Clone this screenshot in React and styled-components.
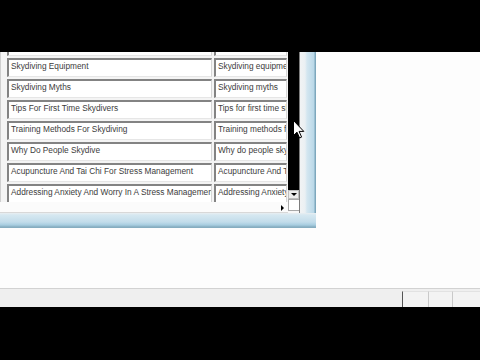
import styled, { createGlobalStyle } from "styled-components";

const GlobalStyle = createGlobalStyle`
  html, body {
    margin: 0;
    padding: 0;
    background: #000;
  }
  body {
    width: 480px;
    height: 360px;
    overflow: hidden;
    font-family: "Liberation Sans", Arial, sans-serif;
  }
`;

// rows of the topic grid, the first one is scrolled mostly out of view
const topics = [
  ["Skydiving Drop Zones", "Skydiving drop zones"],
  ["Skydiving Equipment", "Skydiving equipment"],
  ["Skydiving Myths", "Skydiving myths"],
  ["Tips For First Time Skydivers", "Tips for first time skydivers"],
  ["Training Methods For Skydiving", "Training methods for skydiving"],
  ["Why Do People Skydive", "Why do people skydive"],
  ["Acupuncture And Tai Chi For Stress Management", "Acupuncture And Tai Chi"],
  ["Addressing Anxiety And Worry In A Stress Management", "Addressing Anxiety And Worry"],
];

const Cursor = () => (
  <CursorSvg width="12" height="19" viewBox="0 0 12 19">
    <path
      d="M0.5 0.5 L0.5 15.5 L4 12.2 L6.6 18 L8.6 17.1 L6.1 11.4 L10.8 11.4 Z"
      fill="#fff"
      stroke="#000"
      strokeWidth="1"
      strokeLinejoin="round"
    />
  </CursorSvg>
);

const App = () => {
  return (
    <Page>
      <GlobalStyle />
      <Letterbox />
      <Screen>
        <Window>
          <WindowBody>
            <Client>
              <GridColumn>
                <Viewport>
                  <Grid>
                    {topics.map(([title, lower], i) => (
                      <Row key={i}>
                        <Cell>{title}</Cell>
                        <Cell>{lower}</Cell>
                      </Row>
                    ))}
                  </Grid>
                </Viewport>
                <HScroll>
                  <RightArrow />
                </HScroll>
              </GridColumn>
              <VScroll>
                <Track />
                <DownButton>
                  <DownArrow />
                </DownButton>
                <Corner />
              </VScroll>
            </Client>
            <SideFrame />
          </WindowBody>
          <BottomFrame />
        </Window>
        <Spacer />
        <StatusBar>
          <StatusMain />
          <Panel $w={25} $dark />
          <Panel $w={23} />
          <Panel $w={27} />
        </StatusBar>
        <Cursor />
      </Screen>
      <Letterbox $h={53} />
    </Page>
  );
};

const Page = styled.div`
  width: 480px;
  height: 360px;
  display: flex;
  flex-direction: column;
  background: #000;
`;

const Letterbox = styled.div`
  height: ${(p) => p.$h || 52}px;
  background: #000;
  flex-shrink: 0;
`;

const Screen = styled.div`
  position: relative;
  height: 255px;
  background: #fdfdfd;
  display: flex;
  flex-direction: column;
  overflow: hidden;
`;

const Window = styled.div`
  width: 316px;
  display: flex;
  flex-direction: column;
`;

const WindowBody = styled.div`
  display: flex;
  height: 161px;
`;

const Client = styled.div`
  width: 300px;
  display: flex;
  border-right: 1px solid #7d7d7d;
  box-sizing: border-box;
  background: #f7f7f7;
`;

const GridColumn = styled.div`
  width: 288px;
  display: flex;
  flex-direction: column;
`;

const Viewport = styled.div`
  height: 150px;
  overflow: hidden;
  border-left: 1px solid #cfcfcf;
  padding-left: 6px;
  background: #f4f4f4;
`;

const Grid = styled.div`
  display: flex;
  flex-direction: column;
  gap: 2px;
  margin-top: -15px;
`;

const Row = styled.div`
  display: grid;
  grid-template-columns: 205px 73px;
  column-gap: 2px;
`;

const Cell = styled.div`
  height: 12px;
  padding: 0 1px 4px 2px;
  line-height: 12px;
  font-size: 8.3px;
  color: #3c3c3c;
  white-space: nowrap;
  overflow: hidden;
  background: #fff;
  border-top: 2px solid #838383;
  border-left: 2px solid #838383;
  border-right: 1px solid #d6d6d6;
  border-bottom: 1px solid #e6e6e6;
`;

const HScroll = styled.div`
  flex: 1;
  display: flex;
  justify-content: flex-end;
  align-items: center;
  padding-right: 4px;
  background: #fbfbfb;
  border-bottom: 1px solid #d8d8d8;
`;

const RightArrow = styled.div`
  width: 0;
  height: 0;
  border-top: 3px solid transparent;
  border-bottom: 3px solid transparent;
  border-left: 3px solid #000;
  margin-top: 2px;
`;

const VScroll = styled.div`
  width: 11px;
  display: flex;
  flex-direction: column;
`;

const Track = styled.div`
  height: 138px;
  background: #000;
`;

const DownButton = styled.div`
  height: 9px;
  background: #ececec;
  border: 1px solid #bdbdbd;
  box-sizing: border-box;
  display: flex;
  align-items: center;
  justify-content: center;
`;

const DownArrow = styled.div`
  width: 0;
  height: 0;
  border-left: 3px solid transparent;
  border-right: 3px solid transparent;
  border-top: 3px solid #000;
`;

const Corner = styled.div`
  height: 12px;
  background: #fff;
  border: 1px solid #a9a9a9;
  border-right: none;
  box-sizing: border-box;
`;

const SideFrame = styled.div`
  width: 16px;
  background: linear-gradient(
    to right,
    #f1f3f4 0px,
    #eaf0f3 5px,
    #d3e6f0 7px,
    #bad8e8 14px,
    #7ea8bd 15px,
    #7ea8bd 16px
  );
`;

const BottomFrame = styled.div`
  height: 15px;
  background: linear-gradient(
    to bottom,
    #e9eef1 0px,
    #d6e8f1 2px,
    #c2dcea 9px,
    #a7cde0 12px,
    #86adc0 14px,
    #86adc0 15px
  );
`;

const Spacer = styled.div`
  flex: 1;
`;

const StatusBar = styled.div`
  height: 19px;
  display: flex;
  background: #efefef;
  border-top: 1px solid #d2d2d2;
  box-sizing: border-box;
`;

const StatusMain = styled.div`
  flex: 1;
`;

const Panel = styled.div`
  width: ${(p) => p.$w}px;
  margin-top: 2px;
  border-left: 1px solid ${(p) => (p.$dark ? "#555" : "#c9c9c9")};
  border-top: 1px solid #e2e2e2;
  background: #f3f3f3;
`;

const CursorSvg = styled.svg`
  position: absolute;
  left: 293px;
  top: 68px;
`;

export default App;
